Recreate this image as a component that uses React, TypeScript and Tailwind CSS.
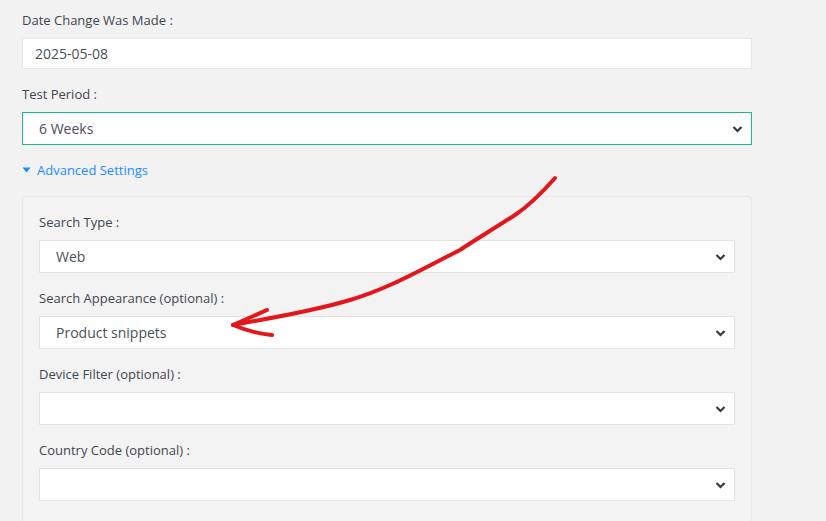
import React from "react";

const font = { fontFamily: '"Open Sans", "Noto Sans", sans-serif' };

function Chevron() {
  return (
    <svg className="absolute right-[8px] top-1/2 -translate-y-1/2" width="11" height="8" viewBox="0 0 11 8">
      <path d="M1.5 2 L5.5 6 L9.5 2" stroke="#343a40" strokeWidth="2.2" fill="none" />
    </svg>
  );
}

function Select({ value, focus }: { value: string; focus?: boolean }) {
  return (
    <div
      className={`relative flex items-center bg-white h-[33px] pl-[16px] text-[14px] text-[#495057] border ${
        focus ? "border-[#20b795]" : "border-[#e3e3e3]"
      }`}
    >
      {value}
      <Chevron />
    </div>
  );
}

function Field({ label, children }: { label: string; children: React.ReactNode }) {
  return (
    <div className="mb-[16px]">
      <div className="text-[13px] text-[#3f4650] leading-[18px] mb-[9px]">{label}</div>
      {children}
    </div>
  );
}

export default function App() {
  return (
    <div className="relative w-[826px] h-[521px] overflow-hidden bg-[#f2f2f2]" style={font}>
      <div className="w-[730px] ml-[22px] pt-[11px]">
        <Field label="Date Change Was Made :">
          <div className="flex items-center bg-white h-[31px] pl-[12px] text-[14px] text-[#495057] border border-[#e6e6e6]">
            2025-05-08
          </div>
        </Field>
        <Field label="Test Period :">
          <Select value="6 Weeks" focus />
        </Field>
        <div className="flex items-center gap-[6px] text-[13px] leading-[18px] text-[#1a8cff] mb-[17px]">
          <svg width="9" height="6" viewBox="0 0 9 6">
            <path d="M0.5 0.5 H8.5 L4.5 5.5 Z" fill="#1a8cff" />
          </svg>
          Advanced Settings
        </div>
        <div className="border border-[#e6e8ea] rounded-[4px] bg-[#f3f3f3] px-[16px] pt-[16px] h-[340px]">
          <Field label="Search Type :">
            <Select value="Web" />
          </Field>
          <Field label="Search Appearance (optional) :">
            <Select value="Product snippets" />
          </Field>
          <Field label="Device Filter (optional) :">
            <Select value="" />
          </Field>
          <Field label="Country Code (optional) :">
            <Select value="" />
          </Field>
        </div>
      </div>
      <svg className="absolute inset-0 pointer-events-none" width="826" height="521">
        <path
          d="M555 178 C540 195 530 205 515 215 C495 228 475 240 460 250 C420 270 390 288 350 300 C310 312 270 318 233 325"
          stroke="#e3161b"
          strokeWidth="4"
          fill="none"
          strokeLinecap="round"
        />
        <path d="M267 310 L233 325 C245 330 258 334 272 335" stroke="#e3161b" strokeWidth="4" fill="none" strokeLinecap="round" strokeLinejoin="round" />
      </svg>
    </div>
  );
}
